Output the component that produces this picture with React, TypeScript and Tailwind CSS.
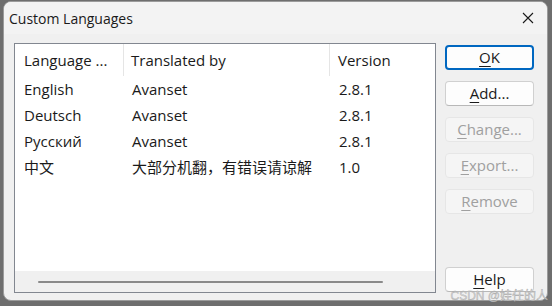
import React from "react";

const rows = [
  { lang: "English", by: "Avanset", ver: "2.8.1" },
  { lang: "Deutsch", by: "Avanset", ver: "2.8.1" },
  { lang: "Русский", by: "Avanset", ver: "2.8.1" },
  { lang: "中文", by: "大部分机翻，有错误请谅解", ver: "1.0" },
];

function DlgButton({ hot, rest, disabled, focused }: { hot: string; rest: string; disabled?: boolean; focused?: boolean }) {
  const base = "h-[25px] w-[89px] rounded-[4px] flex items-center justify-center text-[15px] leading-none";
  const look = disabled
    ? "bg-[#f5f5f5] border border-[#e6e6e6] text-[#a0a0a0]"
    : focused
    ? "bg-[#fdfdfd] border-2 border-[#0067c0] text-[#1a1a1a]"
    : "bg-[#fdfdfd] border border-[#d0d0d0] border-b-[#b8b8b8] text-[#1a1a1a]";
  return (
    <div className={`${base} ${look}`}>
      <span>
        <u className="underline-offset-[3px] decoration-1">{hot}</u>
        {rest}
      </span>
    </div>
  );
}

export default function App() {
  return (
    <div
      className="w-[552px] h-[306px] bg-[#6e6e6e] pt-px pl-[3px] relative overflow-hidden"
      style={{ fontFamily: '"Open Sans", "Noto Sans CJK SC", sans-serif' }}
    >
      <div className="w-[545px] h-[300px] bg-[#f0f0f0] border border-[#9b9b9b] rounded-[8px] flex flex-col overflow-hidden">
        {/* title bar */}
        <div className="h-[32px] bg-[#f3f3f3] flex items-center justify-between pl-[5px] pr-[13px]">
          <span className="text-[14px] text-[#1a1a1a]">Custom Languages</span>
          <svg width="12" height="12" viewBox="0 0 12 12">
            <path d="M1 1 L11 11 M11 1 L1 11" stroke="#1a1a1a" strokeWidth="1.1" />
          </svg>
        </div>

        <div className="flex pl-[10px] pt-[9px] gap-[9px]">
          {/* list view */}
          <div className="w-[422px] h-[250px] border border-[#828790] bg-white flex flex-col text-[15px] text-[#1a1a1a]">
            <div className="h-[32px] grid grid-cols-[109px_206px_1fr] items-center">
              <div className="pl-[9px] h-full flex items-center border-r border-[#e5e5e5]">Language ...</div>
              <div className="pl-[7px] h-full flex items-center border-r border-[#e5e5e5]">Translated by</div>
              <div className="pl-[8px]">Version</div>
            </div>
            <div className="flex-1">
              {rows.map((r) => (
                <div key={r.lang} className="h-[26px] grid grid-cols-[109px_206px_1fr] items-center">
                  <div className="pl-[9px]">{r.lang}</div>
                  <div className="pl-[8px] whitespace-nowrap">{r.by}</div>
                  <div className="pl-[9px]">{r.ver}</div>
                </div>
              ))}
            </div>
            <div className="h-[21px] bg-[#f0f0f0] flex items-center pl-[23px]">
              <div className="w-[345px] h-[2px] rounded-full bg-[#8a8a8a]" />
            </div>
          </div>

          {/* buttons */}
          <div className="flex flex-col pt-[2px] h-[250px]">
            <div className="flex flex-col gap-[11px]">
              <DlgButton hot="O" rest="K" focused />
              <DlgButton hot="A" rest="dd..." />
              <DlgButton hot="C" rest="hange..." disabled />
              <DlgButton hot="E" rest="xport..." disabled />
              <DlgButton hot="R" rest="emove" disabled />
            </div>
            <div className="mt-auto mb-[1px]">
              <DlgButton hot="H" rest="elp" />
            </div>
          </div>
        </div>
      </div>

      <span
        className="absolute right-[4px] bottom-[4px] text-[12px] leading-none text-[#d6d6d6]"
        style={{ fontFamily: '"Liberation Sans", "Noto Sans CJK SC", sans-serif', WebkitTextStroke: "0.3px #9a9a9a" }}
      >
        CSDN @娃任的人
      </span>
    </div>
  );
}
